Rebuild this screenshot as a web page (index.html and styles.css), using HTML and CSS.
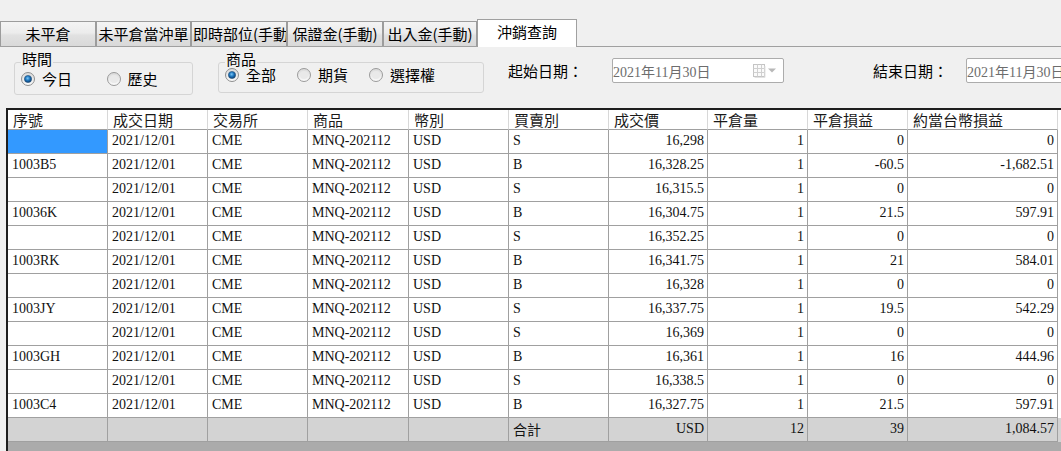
FILE: index.html
```html
<!DOCTYPE html>
<html lang="zh-Hant">
<head>
<meta charset="utf-8">
<title>沖銷查詢</title>
<link rel="stylesheet" href="styles.css">
</head>
<body>
<div class="tabbar">
  <div class="tab w96">未平倉</div>
  <div class="tab w95">未平倉當沖單</div>
  <div class="tab w96">即時部位(手動)</div>
  <div class="tab w96">保證金(手動)</div>
  <div class="tab w94">出入金(手動)</div>
  <div class="tab active">沖銷查詢</div>
</div>

<div class="toolbar">
  <div class="group">
    <div class="legend">時間</div>
    <div class="box box-time">
      <label class="radio r88"><svg class="rb" viewBox="0 0 14 14"><defs><linearGradient id="rg1" x1="0" y1="0" x2="0" y2="1"><stop offset="0" stop-color="#d9d9d9"/><stop offset="1" stop-color="#fbfbfb"/></linearGradient><radialGradient id="dot1" cx="0.45" cy="0.4" r="0.6"><stop offset="0" stop-color="#7cc6f5"/><stop offset="0.5" stop-color="#1f78c0"/><stop offset="1" stop-color="#0c3a6a"/></radialGradient></defs><circle cx="7" cy="7" r="6.5" fill="url(#rg1)" stroke="#8e8f8f"/><circle cx="7" cy="7" r="3.6" fill="url(#dot1)" stroke="#24527e" stroke-width="0.6"/></svg>今日</label>
      <label class="radio r88"><svg class="rb" viewBox="0 0 14 14"><circle cx="7" cy="7" r="6.5" fill="url(#rg1)" stroke="#9a9a9a"/><circle cx="7" cy="7" r="4" fill="#e9e9e9"/></svg>歷史</label>
    </div>
  </div>

  <div class="group g-prod">
    <div class="legend">商品</div>
    <div class="box box-prod">
      <label class="radio r72"><svg class="rb" viewBox="0 0 14 14"><circle cx="7" cy="7" r="6.5" fill="url(#rg1)" stroke="#8e8f8f"/><circle cx="7" cy="7" r="3.6" fill="url(#dot1)" stroke="#24527e" stroke-width="0.6"/></svg>全部</label>
      <label class="radio r72"><svg class="rb" viewBox="0 0 14 14"><circle cx="7" cy="7" r="6.5" fill="url(#rg1)" stroke="#9a9a9a"/><circle cx="7" cy="7" r="4" fill="#e9e9e9"/></svg>期貨</label>
      <label class="radio"><svg class="rb" viewBox="0 0 14 14"><circle cx="7" cy="7" r="6.5" fill="url(#rg1)" stroke="#9a9a9a"/><circle cx="7" cy="7" r="4" fill="#e9e9e9"/></svg>選擇權</label>
    </div>
  </div>

  <div class="field f-start">
    <span class="flabel fl-start">起始日期：</span>
    <div class="date">
      <span class="dtext">2021年11月30日</span>
      <svg class="cal" viewBox="0 0 24 16" width="24" height="16"><rect x="0.5" y="1.5" width="11" height="12" fill="#fafafa" stroke="#c4c4c4"/><path d="M0.5 5.5h11M0.5 9.5h11M4.5 1.5v12M8.5 1.5v12" stroke="#d0d0d0" fill="none"/><path d="M12 3v11.5H1.5" stroke="#e2e2e2" fill="none"/><path d="M15 5.5h8l-4 4z" fill="#b8b8b8"/></svg>
    </div>
  </div>

  <div class="field f-end">
    <span class="flabel fl-end">結束日期：</span>
    <div class="date">
      <span class="dtext">2021年11月30日</span>
    </div>
  </div>
</div>

<div class="grid">
  <div class="row head">
    <div class="c">序號</div><div class="c">成交日期</div><div class="c">交易所</div><div class="c">商品</div><div class="c">幣別</div><div class="c">買賣別</div><div class="c">成交價</div><div class="c">平倉量</div><div class="c">平倉損益</div><div class="c">約當台幣損益</div>
  </div>
  <div class="row"><div class="c sel"></div><div class="c">2021/12/01</div><div class="c">CME</div><div class="c">MNQ-202112</div><div class="c">USD</div><div class="c">S</div><div class="c n">16,298</div><div class="c n">1</div><div class="c n">0</div><div class="c n">0</div></div>
  <div class="row"><div class="c">1003B5</div><div class="c">2021/12/01</div><div class="c">CME</div><div class="c">MNQ-202112</div><div class="c">USD</div><div class="c">B</div><div class="c n">16,328.25</div><div class="c n">1</div><div class="c n">-60.5</div><div class="c n">-1,682.51</div></div>
  <div class="row"><div class="c"></div><div class="c">2021/12/01</div><div class="c">CME</div><div class="c">MNQ-202112</div><div class="c">USD</div><div class="c">S</div><div class="c n">16,315.5</div><div class="c n">1</div><div class="c n">0</div><div class="c n">0</div></div>
  <div class="row"><div class="c">10036K</div><div class="c">2021/12/01</div><div class="c">CME</div><div class="c">MNQ-202112</div><div class="c">USD</div><div class="c">B</div><div class="c n">16,304.75</div><div class="c n">1</div><div class="c n">21.5</div><div class="c n">597.91</div></div>
  <div class="row"><div class="c"></div><div class="c">2021/12/01</div><div class="c">CME</div><div class="c">MNQ-202112</div><div class="c">USD</div><div class="c">S</div><div class="c n">16,352.25</div><div class="c n">1</div><div class="c n">0</div><div class="c n">0</div></div>
  <div class="row"><div class="c">1003RK</div><div class="c">2021/12/01</div><div class="c">CME</div><div class="c">MNQ-202112</div><div class="c">USD</div><div class="c">B</div><div class="c n">16,341.75</div><div class="c n">1</div><div class="c n">21</div><div class="c n">584.01</div></div>
  <div class="row"><div class="c"></div><div class="c">2021/12/01</div><div class="c">CME</div><div class="c">MNQ-202112</div><div class="c">USD</div><div class="c">B</div><div class="c n">16,328</div><div class="c n">1</div><div class="c n">0</div><div class="c n">0</div></div>
  <div class="row"><div class="c">1003JY</div><div class="c">2021/12/01</div><div class="c">CME</div><div class="c">MNQ-202112</div><div class="c">USD</div><div class="c">S</div><div class="c n">16,337.75</div><div class="c n">1</div><div class="c n">19.5</div><div class="c n">542.29</div></div>
  <div class="row"><div class="c"></div><div class="c">2021/12/01</div><div class="c">CME</div><div class="c">MNQ-202112</div><div class="c">USD</div><div class="c">S</div><div class="c n">16,369</div><div class="c n">1</div><div class="c n">0</div><div class="c n">0</div></div>
  <div class="row"><div class="c">1003GH</div><div class="c">2021/12/01</div><div class="c">CME</div><div class="c">MNQ-202112</div><div class="c">USD</div><div class="c">B</div><div class="c n">16,361</div><div class="c n">1</div><div class="c n">16</div><div class="c n">444.96</div></div>
  <div class="row"><div class="c"></div><div class="c">2021/12/01</div><div class="c">CME</div><div class="c">MNQ-202112</div><div class="c">USD</div><div class="c">S</div><div class="c n">16,338.5</div><div class="c n">1</div><div class="c n">0</div><div class="c n">0</div></div>
  <div class="row"><div class="c">1003C4</div><div class="c">2021/12/01</div><div class="c">CME</div><div class="c">MNQ-202112</div><div class="c">USD</div><div class="c">B</div><div class="c n">16,327.75</div><div class="c n">1</div><div class="c n">21.5</div><div class="c n">597.91</div></div>
  <div class="row total"><div class="c"></div><div class="c"></div><div class="c"></div><div class="c"></div><div class="c"></div><div class="c cjk">合計</div><div class="c n">USD</div><div class="c n">12</div><div class="c n">39</div><div class="c n">1,084.57</div></div>
</div>
</body>
</html>
```

FILE: styles.css
```css
* { box-sizing: border-box; }

html, body {
  margin: 0;
  padding: 0;
  height: 451px;
  overflow: hidden;
}

body {
  background: #f0f0f0;
  color: #000;
  font-family: "Noto Sans CJK TC", "Noto Sans", sans-serif;
  font-size: 15px;
}

/* ---------- tabs ---------- */
.tabbar {
  display: flex;
  align-items: flex-end;
  height: 47px;
  border-bottom: 1px solid #a0a0a0;
}

.tab {
  height: 25px;
  border: 1px solid #9c9c9c;
  border-bottom: none;
  background: linear-gradient(to bottom, #f4f4f4 0%, #ececec 45%, #e1e1e1 55%, #d9d9d9 100%);
  font-size: 15px;
  line-height: 23px;
  text-align: center;
  white-space: nowrap;
  overflow: hidden;
  padding: 0 1px;
}

.w96 { width: 96px; }
.w95 { width: 95px; }
.w94 { width: 94px; }

.tab.active {
  width: 100px;
  height: 28px;
  margin-bottom: -1px;
  background: #fff;
  border-color: #a0a0a0;
  line-height: 24px;
  position: relative;
}

/* ---------- toolbar ---------- */
.toolbar {
  display: flex;
  align-items: flex-start;
  height: 61px;
  padding-left: 14px;
  white-space: nowrap;
}

.group {
  display: flex;
  flex-direction: column;
}

.g-prod { margin-left: 25px; }

.legend {
  align-self: flex-start;
  position: relative;
  margin: 4px 0 -5px 7px;
  padding: 0 1px;
  background: #f0f0f0;
  font-size: 15px;
  line-height: 16px;
}

.box {
  display: flex;
  align-items: flex-start;
  border: 1px solid #d5d5d5;
  border-radius: 3px;
  padding-left: 6px;
}

.box-time {
  width: 179px;
  height: 33px;
  padding-top: 8px;
}

.box-prod {
  width: 266px;
  height: 31px;
  padding-top: 4px;
}

.radio {
  display: flex;
  align-items: center;
  gap: 7px;
  font-size: 15px;
  line-height: 16px;
}

.r88 { width: 88px; }
.r72 { width: 72px; }

.rb {
  width: 14px;
  height: 14px;
  flex: none;
}

.field {
  display: flex;
  align-items: center;
  margin-top: 11px;
}

.f-start { margin-left: 24px; }
.f-end { margin-left: 89px; }

.flabel {
  font-size: 15px;
  line-height: 20px;
}

.fl-start { width: 104px; }
.fl-end { width: 93px; }

.date {
  display: flex;
  align-items: center;
  width: 172px;
  height: 25px;
  border: 1px solid #acacac;
  border-radius: 2px;
  background: #fff;
  flex: none;
}

.dtext {
  font-family: "Liberation Serif", "Noto Sans CJK TC", serif;
  font-size: 14px;
  color: #6d6d6d;
}

.cal {
  margin-left: auto;
  margin-right: 6px;
}

/* ---------- grid ---------- */
.grid {
  margin-left: 6px;
  height: 343px;
  border-top: 2px solid #1e1e1e;
  border-left: 2px solid #1e1e1e;
  background: #ababab;
}

.row {
  display: grid;
  grid-template-columns: 100px 100px 100px 101px 100px 100px 99px 100px 100px 150px;
  height: 24px;
  background: #fff;
  font-family: "Liberation Serif", "Noto Sans CJK TC", serif;
  font-size: 14px;
  color: #111;
}

.c {
  height: 24px;
  border-right: 1px solid #a0a0a0;
  border-bottom: 1px solid #a0a0a0;
  padding: 0 3px 0 4px;
  line-height: 22px;
  white-space: nowrap;
  overflow: hidden;
}

.c.n { text-align: right; }

.c.sel { background: #3399ff; }

.c.cjk {
  font-family: "Noto Sans CJK TC", sans-serif;
}

.head {
  height: 20px;
  font-family: "Noto Sans CJK TC", sans-serif;
  font-size: 15px;
  color: #1a1a1a;
}

.head .c {
  height: 20px;
  line-height: 19px;
  padding-left: 5px;
  overflow: visible;
  border-right-color: #d8d8d8;
}

.total,
.total .c {
  background: #d3d3d3;
}
```
